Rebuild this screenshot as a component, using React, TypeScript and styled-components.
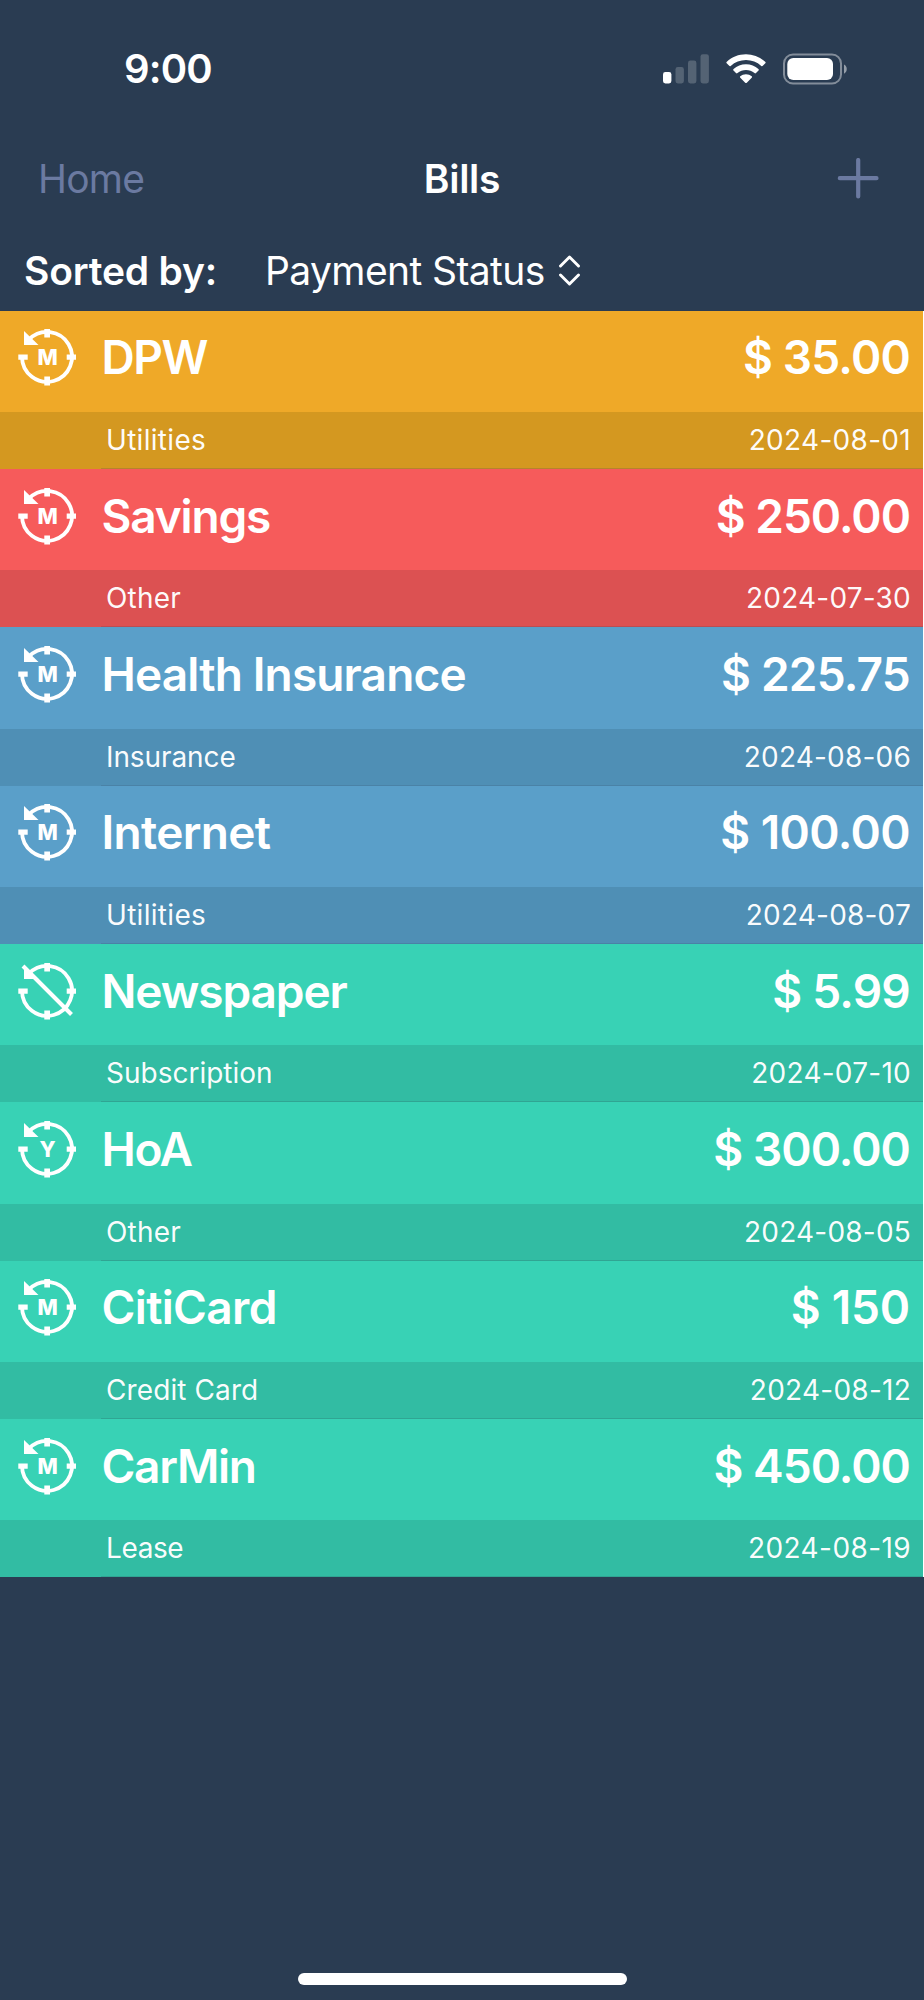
import React from "react"
import styled, { createGlobalStyle, css } from "styled-components"

const GlobalStyle = createGlobalStyle`
  * {
    box-sizing: border-box;
  }

  body {
    margin: 0;
    background: #2a3c52;
    font-family: "Inter", sans-serif;
    color: #ffffff;
  }

  p, h1, ul {
    margin: 0;
    padding: 0;
  }
`
const Screen = styled.div`
  display: flex;
  flex-direction: column;
  width: 924px;
  height: 2000px;
  background: #2a3c52;
  overflow: hidden;
`
const StatusBar = styled.div`
  display: flex;
  align-items: center;
  justify-content: space-between;
  height: 138px;
  padding: 0 76px 0 124px;
`
const Time = styled.p`
  font-weight: 600;
  font-size: 40px;
  line-height: 48px;
  letter-spacing: -0.8px;
`
const StatusIcons = styled.div`
  display: flex;
  align-items: center;
  gap: 17px;
  height: 32px;
`
const NavBar = styled.div`
  display: grid;
  grid-template-columns: 1fr auto 1fr;
  align-items: center;
  height: 82px;
  padding: 0 45px 0 38px;
`
const NavLink = styled.p`
  font-size: 39px;
  line-height: 48px;
  letter-spacing: -0.8px;
  color: #6b7aa1;
`
const Title = styled.h1`
  font-weight: 600;
  font-size: 39px;
  line-height: 48px;
  letter-spacing: -0.3px;
  margin-left: 7px;
`
const AddButton = styled.div`
  display: flex;
  justify-content: flex-end;
`
const SortBar = styled.div`
  display: flex;
  align-items: center;
  height: 90.6px;
  padding: 12px 24px 0;
`
const SortLabel = styled.p`
  font-weight: 600;
  font-size: 39px;
  line-height: 48px;
  letter-spacing: -0.2px;
  width: 241px;
`
const SortValue = styled.p`
  font-size: 39px;
  line-height: 48px;
  letter-spacing: -0.6px;
  margin-right: 14px;
`
const BillList = styled.ul`
  list-style: none;
  border-right: 1px solid #ffffff;
`

type Status = "due" | "late" | "upcoming" | "paid"

const colors: Record<Status, { main: string; sub: string; line: string }> = {
  due: { main: "#efa928", sub: "#d49820", line: "#b6842c" },
  late: { main: "#f65b5b", sub: "#dc5152", line: "#bc4c52" },
  upcoming: { main: "#5a9fc9", sub: "#4f8fb5", line: "#4a82a6" },
  paid: { main: "#38d2b5", sub: "#32bca3", line: "#30a593" },
}

const BillMain = styled.div`
  display: flex;
  height: 101.35px;
  padding: 16.6px 13px 0 17px;
`
const BillName = styled.p<{ $tracking: number }>`
  flex: 1;
  margin-left: 24.5px;
  font-weight: 600;
  font-size: 46px;
  line-height: 60px;
  letter-spacing: ${({ $tracking }) => $tracking}px;
`
const BillAmount = styled.p<{ $tracking: number }>`
  font-weight: 600;
  font-size: 46px;
  line-height: 60px;
  letter-spacing: ${({ $tracking }) => $tracking}px;
`
const BillDetails = styled.div`
  display: flex;
  flex-direction: column;
  height: 57px;
`
const BillMeta = styled.div`
  display: flex;
  justify-content: space-between;
  height: 56px;
  padding: 0 12px 0 106px;
  color: rgba(255, 255, 255, 0.97);
`
const MetaText = styled.p<{ $tracking: number }>`
  font-size: 28px;
  line-height: 57px;
  letter-spacing: ${({ $tracking }) => $tracking}px;
`
const Separator = styled.div`
  height: 1px;
  margin-left: 101px;
`
const BillRow = styled.li<{ $status: Status }>`
  display: flex;
  flex-direction: column;
  height: 158.35px;

  ${({ $status }) => css`
    background: ${colors[$status].main};

    ${BillDetails} {
      background: ${colors[$status].sub};
    }

    ${Separator} {
      background: ${colors[$status].line};
    }
  `}
`
const Footer = styled.div`
  display: flex;
  flex: 1;
  align-items: flex-end;
  justify-content: center;
  padding-bottom: 15px;
`
const HomeIndicator = styled.div`
  width: 329px;
  height: 12px;
  border-radius: 6px;
  background: #ffffff;
`
const CycleLetter = styled.text`
  font-weight: 800;
  font-size: 21.5px;
  text-anchor: middle;
`

function SignalIcon() {
  return (
    <svg width="46" height="30" viewBox="0 0 46 30" fill="#ffffff">
      <rect x="0" y="18" width="8.4" height="11.5" rx="2.4" />
      <rect x="12.5" y="13" width="8.4" height="16.5" rx="2.4" opacity="0.2" />
      <rect x="25" y="6.5" width="8.4" height="23" rx="2.4" opacity="0.2" />
      <rect x="37.5" y="0.2" width="8.4" height="29.3" rx="2.4" opacity="0.2" />
    </svg>
  )
}

function WifiIcon() {
  return (
    <svg width="40" height="30" viewBox="0 0 40 30" fill="#ffffff">
      <path d="M20 0.3C27.4 0.3 34 3 39.2 7.7C39.8 8.2 39.8 8.8 39.3 9.3L36.8 11.8C36.3 12.3 35.8 12.3 35.3 11.9C31 8.2 25.8 6.1 20 6.1C14.2 6.1 9 8.2 4.7 11.9C4.2 12.3 3.7 12.3 3.2 11.8L0.7 9.3C0.2 8.8 0.2 8.2 0.8 7.7C6 3 12.6 0.3 20 0.3Z" />
      <path d="M20 10.2C24.8 10.2 29 12 32.4 14.9C33 15.4 33 16 32.5 16.5L30 19C29.5 19.5 29 19.5 28.5 19.1C26.1 17.1 23.2 16 20 16C16.8 16 13.9 17.1 11.5 19.1C11 19.5 10.5 19.5 10 19L7.5 16.5C7 16 7 15.4 7.6 14.9C11 12 15.2 10.2 20 10.2Z" />
      <path d="M20 20.2C22.2 20.2 24.2 21 25.7 22.2C26.2 22.6 26.2 23.2 25.7 23.7L20.8 28.7C20.3 29.2 19.7 29.2 19.2 28.7L14.3 23.7C13.8 23.2 13.8 22.6 14.3 22.2C15.8 21 17.8 20.2 20 20.2Z" />
    </svg>
  )
}

function BatteryIcon() {
  return (
    <svg width="65" height="32" viewBox="0 0 65 32" fill="none">
      <rect x="1" y="1.5" width="57" height="29" rx="9" stroke="#ffffff" strokeOpacity="0.42" strokeWidth="2" />
      <rect x="4.3" y="5" width="45.7" height="22" rx="6" fill="#ffffff" />
      <path d="M61 11.5C64.7 13.3 64.7 18.9 61 20.7V11.5Z" fill="#ffffff" fillOpacity="0.5" />
    </svg>
  )
}

function PlusIcon() {
  return (
    <svg width="42" height="42" viewBox="0 0 42 42" fill="none">
      <path d="M21.2 2V38.5M2.8 20.2H39.5" stroke="#6b7aa1" strokeWidth="4.2" strokeLinecap="round" />
    </svg>
  )
}

function SortIcon() {
  return (
    <svg width="22" height="32" viewBox="0 0 22 32" fill="none">
      <path d="M1.5 11L10.500 2L19.5 11M1.5 20L10.500 29L19.5 20" stroke="#ffffff" strokeWidth="2.9" strokeLinecap="round" strokeLinejoin="round" />
    </svg>
  )
}

function CycleIcon({ cycle }: { cycle?: string }) {
  return (
    <svg width="60" height="60" viewBox="0 0 60 60" fill="none">
      <path d="M12.2 12.3A25 25 0 1 1 5 30" stroke="#ffffff" strokeWidth="3.8" />
      <path d="M7 4V18H21.5Z" fill="#ffffff" />
      <path d="M27.3 2H33V10.5H27.3ZM27.3 49.5H33V58.5H27.3ZM1.3 27.5H10.7V32.8H1.3ZM49.7 27.5H59V32.8H49.7Z" fill="#ffffff" />
      {cycle ?
        <CycleLetter x="30.7" y="38.2" fill="#ffffff">{cycle}</CycleLetter>
        :
        <path d="M6 5L54.5 53.5" stroke="#ffffff" strokeWidth="4" />
      }
    </svg>
  )
}

// [name, amount, category, date] letter spacing, in px
type Tracking = [number, number, number, number]

interface Bill {
  name: string
  amount: string
  category: string
  date: string
  status: Status
  cycle?: string
  tracking: Tracking
}

const bills: Bill[] = [
  { name: "DPW", amount: "$ 35.00", category: "Utilities", date: "2024-08-01", status: "due", cycle: "M", tracking: [-1.4, -0.8, 0.3, 0.3] },
  { name: "Savings", amount: "$ 250.00", category: "Other", date: "2024-07-30", status: "late", cycle: "M", tracking: [-1.15, -1, 0.2, 0.22] },
  { name: "Health Insurance", amount: "$ 225.75", category: "Insurance", date: "2024-08-06", status: "upcoming", cycle: "M", tracking: [-0.85, -0.8, -0.1, 0.2] },
  { name: "Internet", amount: "$ 100.00", category: "Utilities", date: "2024-08-07", status: "upcoming", cycle: "M", tracking: [-0.65, -0.6, 0.3, 0.2] },
  { name: "Newspaper", amount: "$ 5.99", category: "Subscription", date: "2024-07-10", status: "paid", tracking: [-1.1, -0.75, 0, 0.25] },
  { name: "HoA", amount: "$ 300.00", category: "Other", date: "2024-08-05", status: "paid", cycle: "Y", tracking: [-1.4, -0.95, 0.2, 0.2] },
  { name: "CitiCard", amount: "$ 150", category: "Credit Card", date: "2024-08-12", status: "paid", cycle: "M", tracking: [-0.65, -0.2, 0.1, 0.25] },
  { name: "CarMin", amount: "$ 450.00", category: "Lease", date: "2024-08-19", status: "paid", cycle: "M", tracking: [-1.3, -0.95, -0.4, 0.4] },
]

export default function App() {
  return (
    <Screen>
      <GlobalStyle />
      <StatusBar>
        <Time>9:00</Time>
        <StatusIcons>
          <SignalIcon />
          <WifiIcon />
          <BatteryIcon />
        </StatusIcons>
      </StatusBar>
      <NavBar>
        <NavLink>Home</NavLink>
        <Title>Bills</Title>
        <AddButton>
          <PlusIcon />
        </AddButton>
      </NavBar>
      <SortBar>
        <SortLabel>Sorted by:</SortLabel>
        <SortValue>Payment Status</SortValue>
        <SortIcon />
      </SortBar>
      <BillList>
        {bills.map(({ name, amount, category, date, status, cycle, tracking }) => (
          <BillRow key={name} $status={status}>
            <BillMain>
              <CycleIcon cycle={cycle} />
              <BillName $tracking={tracking[0]}>{name}</BillName>
              <BillAmount $tracking={tracking[1]}>{amount}</BillAmount>
            </BillMain>
            <BillDetails>
              <BillMeta>
                <MetaText $tracking={tracking[2]}>{category}</MetaText>
                <MetaText $tracking={tracking[3]}>{date}</MetaText>
              </BillMeta>
              <Separator />
            </BillDetails>
          </BillRow>
        ))}
      </BillList>
      <Footer>
        <HomeIndicator />
      </Footer>
    </Screen>
  )
}
